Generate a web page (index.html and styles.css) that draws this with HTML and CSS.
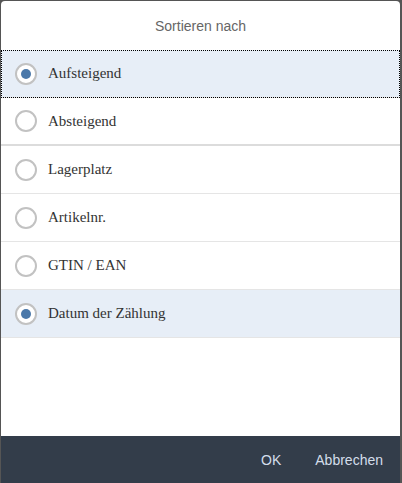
FILE: index.html
```html
<!DOCTYPE html>
<html lang="de">
<head>
    <meta charset="UTF-8">
    <title>Sortieren nach</title>
    <link rel="stylesheet" href="styles.css">
</head>
<body>

    <!-- Sort Dialog -->
    <div class="dialog">
        <div class="dialog-header">Sortieren nach</div>

        <ul class="option-list">
            <li class="option selected focused"><span class="radio checked"></span>Aufsteigend</li>
            <li class="option thick"><span class="radio"></span>Absteigend</li>
            <li class="option"><span class="radio"></span>Lagerplatz</li>
            <li class="option"><span class="radio"></span>Artikelnr.</li>
            <li class="option"><span class="radio"></span>GTIN / EAN</li>
            <li class="option selected"><span class="radio checked"></span>Datum der Zählung</li>
        </ul>

        <div class="dialog-footer">
            <button class="footer-btn">OK</button>
            <button class="footer-btn">Abbrechen</button>
        </div>
    </div>

</body>
</html>
```

FILE: styles.css
```css
/* General Styling */
body {
    margin: 0;
    padding: 0;
    background-color: #555;
    font-family: "Liberation Sans", Arial, sans-serif;
}

/* Dialog */
.dialog {
    margin: 1px 2px 0 1px;
    height: 482px;
    background-color: white;
    border-radius: 4px 4px 0 0;
    overflow: hidden;
    display: flex;
    flex-direction: column;
}

.dialog-header {
    height: 48px;
    display: flex;
    align-items: center;
    justify-content: center;
    color: #666;
    font-size: 14px;
    flex-shrink: 0;
    padding-top: 1px;
}

/* Options */
.option-list {
    list-style: none;
    margin: 0;
    padding: 0;
    flex: 1;
}

.option {
    height: 47px;
    display: flex;
    align-items: center;
    padding-left: 14px;
    border-bottom: 1px solid #e5e5e5;
    font-family: "Liberation Serif", "Times New Roman", serif;
    font-size: 15px;
    color: #333;
}

.option.thick {
    height: 46px;
    border-bottom: 2px solid #dcdcdc;
}

.option.selected {
    background-color: #e7eef7;
}

.option.focused {
    outline: 1px dotted #000;
    outline-offset: -1px;
}

.radio {
    width: 18px;
    height: 18px;
    border: 2px solid #c2c2c2;
    border-radius: 50%;
    background-color: white;
    margin-right: 11px;
    display: flex;
    align-items: center;
    justify-content: center;
    flex-shrink: 0;
}

.radio.checked::after {
    content: "";
    width: 10px;
    height: 10px;
    border-radius: 50%;
    background-color: #4a78aa;
}

/* Footer */
.dialog-footer {
    height: 47px;
    background-color: #333d4a;
    display: flex;
    align-items: center;
    justify-content: flex-end;
    padding-right: 10px;
    flex-shrink: 0;
}

.footer-btn {
    background: none;
    border: none;
    color: #d3deeb;
    font-family: "Liberation Sans", Arial, sans-serif;
    font-size: 14px;
    padding: 0 7px;
    margin-left: 20px;
}
```
